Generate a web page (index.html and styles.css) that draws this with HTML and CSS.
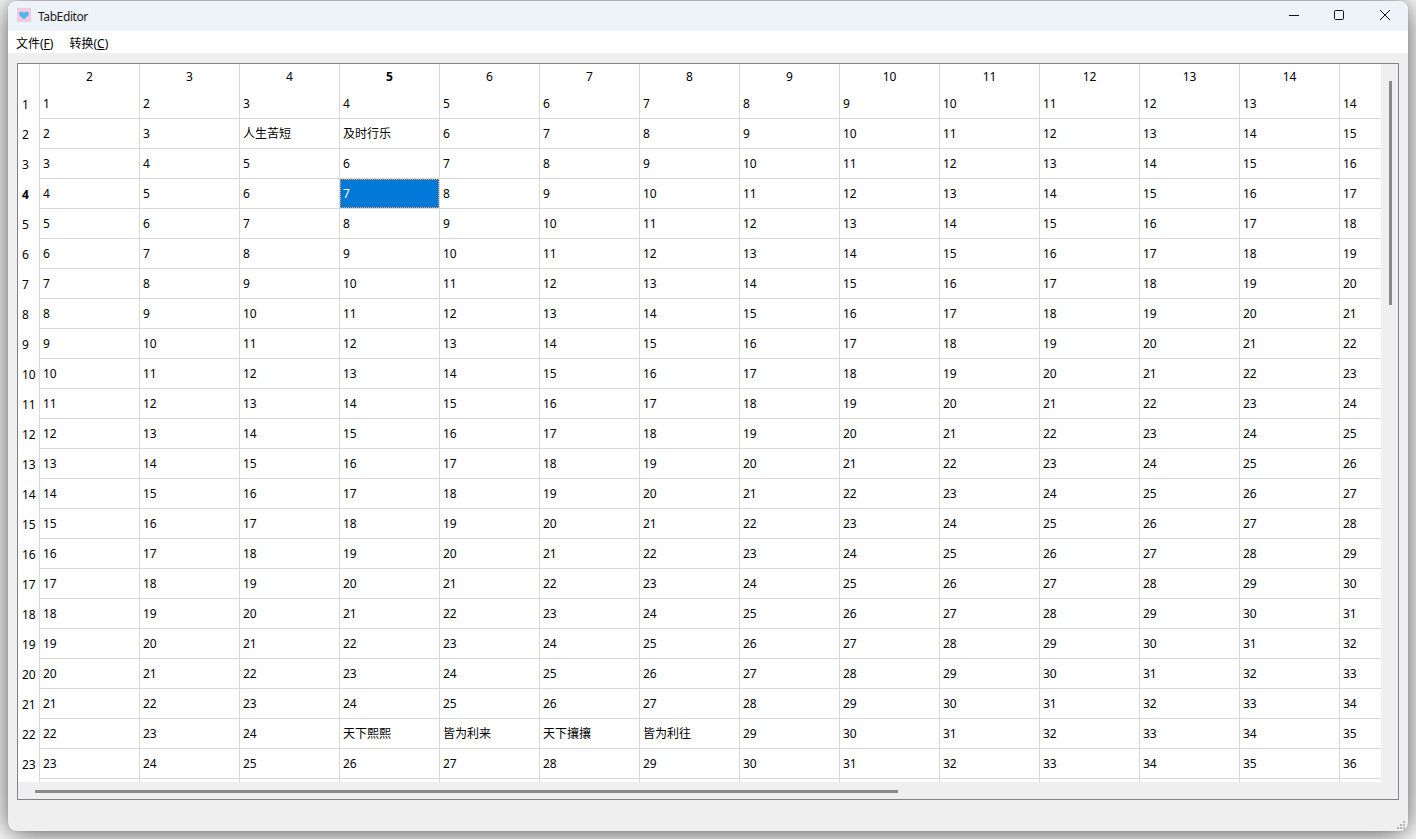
FILE: index.html
```html
<!DOCTYPE html>
<html lang="zh-CN">
<head>
  <meta charset="UTF-8">
  <title>TabEditor</title>
  <link rel="stylesheet" href="styles.css">
</head>
<body>
<div class="window">
  <div class="titlebar">
    <svg class="app-icon" width="14" height="14" viewBox="0 0 14 14">
      <rect x="0.5" y="0.5" width="13" height="13" fill="#fcc6e4" stroke="#e8cfe0"/>
      <path d="M7 11.2 L2.6 7.4 C1.2 5.6 2.6 3.8 4.4 3.8 C5.6 3.8 6.5 4.2 7 5 C7.5 4.2 8.4 3.8 9.6 3.8 C11.4 3.8 12.8 5.6 11.4 7.4 Z" fill="#4db8ee"/>
    </svg>
    <span class="app-title">TabEditor</span>
    <div class="win-btns">
      <div class="win-btn">
        <svg width="12" height="12" viewBox="0 0 12 12"><path d="M2 6.5 H12" stroke="#111" fill="none"/></svg>
      </div>
      <div class="win-btn">
        <svg width="12" height="12" viewBox="0 0 12 12"><rect x="1.5" y="1.5" width="9" height="9" rx="1" stroke="#111" fill="none"/></svg>
      </div>
      <div class="win-btn">
        <svg width="12" height="12" viewBox="0 0 12 12"><path d="M1 1 L11 11 M11 1 L1 11" stroke="#111" fill="none"/></svg>
      </div>
    </div>
  </div>

  <div class="menubar">
    <span class="menu-item">文件(<u>F</u>)</span>
    <span class="menu-item">转换(<u>C</u>)</span>
  </div>

  <div class="central">
    <div class="frame">
      <div class="viewport">
        <table class="sheet">
          <thead>
            <tr><th class="corner"></th><th>2</th><th>3</th><th>4</th><th class="cur">5</th><th>6</th><th>7</th><th>8</th><th>9</th><th>10</th><th>11</th><th>12</th><th>13</th><th>14</th><th></th></tr>
          </thead>
          <tbody>
            <tr><th>1</th><td>1</td><td>2</td><td>3</td><td>4</td><td>5</td><td>6</td><td>7</td><td>8</td><td>9</td><td>10</td><td>11</td><td>12</td><td>13</td><td>14</td></tr>
            <tr><th>2</th><td>2</td><td>3</td><td>人生苦短</td><td>及时行乐</td><td>6</td><td>7</td><td>8</td><td>9</td><td>10</td><td>11</td><td>12</td><td>13</td><td>14</td><td>15</td></tr>
            <tr><th>3</th><td>3</td><td>4</td><td>5</td><td>6</td><td>7</td><td>8</td><td>9</td><td>10</td><td>11</td><td>12</td><td>13</td><td>14</td><td>15</td><td>16</td></tr>
            <tr><th class="cur">4</th><td>4</td><td>5</td><td>6</td><td class="selected">7</td><td>8</td><td>9</td><td>10</td><td>11</td><td>12</td><td>13</td><td>14</td><td>15</td><td>16</td><td>17</td></tr>
            <tr><th>5</th><td>5</td><td>6</td><td>7</td><td>8</td><td>9</td><td>10</td><td>11</td><td>12</td><td>13</td><td>14</td><td>15</td><td>16</td><td>17</td><td>18</td></tr>
            <tr><th>6</th><td>6</td><td>7</td><td>8</td><td>9</td><td>10</td><td>11</td><td>12</td><td>13</td><td>14</td><td>15</td><td>16</td><td>17</td><td>18</td><td>19</td></tr>
            <tr><th>7</th><td>7</td><td>8</td><td>9</td><td>10</td><td>11</td><td>12</td><td>13</td><td>14</td><td>15</td><td>16</td><td>17</td><td>18</td><td>19</td><td>20</td></tr>
            <tr><th>8</th><td>8</td><td>9</td><td>10</td><td>11</td><td>12</td><td>13</td><td>14</td><td>15</td><td>16</td><td>17</td><td>18</td><td>19</td><td>20</td><td>21</td></tr>
            <tr><th>9</th><td>9</td><td>10</td><td>11</td><td>12</td><td>13</td><td>14</td><td>15</td><td>16</td><td>17</td><td>18</td><td>19</td><td>20</td><td>21</td><td>22</td></tr>
            <tr><th>10</th><td>10</td><td>11</td><td>12</td><td>13</td><td>14</td><td>15</td><td>16</td><td>17</td><td>18</td><td>19</td><td>20</td><td>21</td><td>22</td><td>23</td></tr>
            <tr><th>11</th><td>11</td><td>12</td><td>13</td><td>14</td><td>15</td><td>16</td><td>17</td><td>18</td><td>19</td><td>20</td><td>21</td><td>22</td><td>23</td><td>24</td></tr>
            <tr><th>12</th><td>12</td><td>13</td><td>14</td><td>15</td><td>16</td><td>17</td><td>18</td><td>19</td><td>20</td><td>21</td><td>22</td><td>23</td><td>24</td><td>25</td></tr>
            <tr><th>13</th><td>13</td><td>14</td><td>15</td><td>16</td><td>17</td><td>18</td><td>19</td><td>20</td><td>21</td><td>22</td><td>23</td><td>24</td><td>25</td><td>26</td></tr>
            <tr><th>14</th><td>14</td><td>15</td><td>16</td><td>17</td><td>18</td><td>19</td><td>20</td><td>21</td><td>22</td><td>23</td><td>24</td><td>25</td><td>26</td><td>27</td></tr>
            <tr><th>15</th><td>15</td><td>16</td><td>17</td><td>18</td><td>19</td><td>20</td><td>21</td><td>22</td><td>23</td><td>24</td><td>25</td><td>26</td><td>27</td><td>28</td></tr>
            <tr><th>16</th><td>16</td><td>17</td><td>18</td><td>19</td><td>20</td><td>21</td><td>22</td><td>23</td><td>24</td><td>25</td><td>26</td><td>27</td><td>28</td><td>29</td></tr>
            <tr><th>17</th><td>17</td><td>18</td><td>19</td><td>20</td><td>21</td><td>22</td><td>23</td><td>24</td><td>25</td><td>26</td><td>27</td><td>28</td><td>29</td><td>30</td></tr>
            <tr><th>18</th><td>18</td><td>19</td><td>20</td><td>21</td><td>22</td><td>23</td><td>24</td><td>25</td><td>26</td><td>27</td><td>28</td><td>29</td><td>30</td><td>31</td></tr>
            <tr><th>19</th><td>19</td><td>20</td><td>21</td><td>22</td><td>23</td><td>24</td><td>25</td><td>26</td><td>27</td><td>28</td><td>29</td><td>30</td><td>31</td><td>32</td></tr>
            <tr><th>20</th><td>20</td><td>21</td><td>22</td><td>23</td><td>24</td><td>25</td><td>26</td><td>27</td><td>28</td><td>29</td><td>30</td><td>31</td><td>32</td><td>33</td></tr>
            <tr><th>21</th><td>21</td><td>22</td><td>23</td><td>24</td><td>25</td><td>26</td><td>27</td><td>28</td><td>29</td><td>30</td><td>31</td><td>32</td><td>33</td><td>34</td></tr>
            <tr><th>22</th><td>22</td><td>23</td><td>24</td><td>天下熙熙</td><td>皆为利来</td><td>天下攘攘</td><td>皆为利往</td><td>29</td><td>30</td><td>31</td><td>32</td><td>33</td><td>34</td><td>35</td></tr>
            <tr><th>23</th><td>23</td><td>24</td><td>25</td><td>26</td><td>27</td><td>28</td><td>29</td><td>30</td><td>31</td><td>32</td><td>33</td><td>34</td><td>35</td><td>36</td></tr>
            <tr><th></th><td></td><td></td><td></td><td></td><td></td><td></td><td></td><td></td><td></td><td></td><td></td><td></td><td></td><td></td></tr>
          </tbody>
        </table>
      </div>
      <div class="vscroll"><div class="vthumb"></div></div>
      <div class="hscroll"><div class="hthumb"></div></div>
      <div class="scroll-corner"></div>
    </div>
  </div>

  <div class="statusbar">
    <svg class="grip" width="10" height="9" viewBox="0 0 10 9">
      <rect x="6" y="0" width="2" height="2"/>
      <rect x="3" y="3" width="2" height="2"/>
      <rect x="6" y="3" width="2" height="2"/>
      <rect x="0" y="6" width="2" height="2"/>
      <rect x="3" y="6" width="2" height="2"/>
      <rect x="6" y="6" width="2" height="2"/>
    </svg>
  </div>
</div>
</body>
</html>
```

FILE: styles.css
```css
* { margin: 0; padding: 0; box-sizing: border-box; }

html, body {
  height: 100%;
  overflow: hidden;
}

body {
  background: #ffffff;
  font-family: "Noto Sans", "Noto Sans CJK SC", "Open Sans", sans-serif;
  font-size: 12px;
  color: #000;
  padding: 1px 8px 8px;
}

.window {
  width: 1400px;
  height: 830px;
  background: #efefef;
  border-radius: 8px;
  overflow: hidden;
  display: flex;
  flex-direction: column;
  box-shadow: 0 0 1px #8c8c8c, 0 2px 30px rgba(0, 0, 0, 0.7);
}

/* Title bar */
.titlebar {
  height: 30px;
  background: #eef3fa;
  display: flex;
  align-items: center;
  padding-left: 9px;
}

.app-icon {
  flex: none;
  margin-bottom: 2px;
}

.app-title {
  margin-left: 7px;
  color: #1a1a1a;
  letter-spacing: -0.4px;
}

.win-btns {
  margin-left: auto;
  display: flex;
}

.win-btn {
  width: 46px;
  height: 30px;
  display: flex;
  justify-content: center;
  padding-top: 8px;
}

/* Menu */
.menubar {
  height: 22px;
  background: #fff;
  display: flex;
  align-items: center;
  padding: 1px 0 0 8px;
  gap: 16px;
}

/* Table */
.central {
  height: 747px;
  padding: 10px 9px 0;
}

.frame {
  width: 1382px;
  height: 737px;
  border: 1px solid #82828c;
  display: grid;
  grid-template-columns: 1363px 17px;
  grid-template-rows: 718px 17px;
}

.viewport {
  overflow: hidden;
  background: #fff;
}

.sheet {
  border-collapse: separate;
  border-spacing: 0;
  table-layout: fixed;
  width: 1422px;
}

.sheet th, .sheet td {
  width: 100px;
  height: 30px;
  font-weight: normal;
  white-space: nowrap;
  overflow: hidden;
  border-right: 1px solid #d8d8d8;
}

.sheet thead th {
  height: 25px;
  text-align: center;
  vertical-align: middle;
}

.sheet th.corner { width: 22px; }

.sheet tbody th {
  width: 22px;
  text-align: left;
  padding-left: 4px;
}

.sheet td {
  padding: 0 0 1px 3px;
  border-bottom: 1px solid #d8d8d8;
}

.sheet th.cur { font-weight: bold; }

.sheet td.selected {
  position: relative;
  background: #0078d7;
  color: #fff;
}

/* dotted focus box inside the grid lines */
.sheet td.selected::after {
  content: '';
  position: absolute;
  inset: 0;
  border: 1px dotted #f0a24c;
}

/* Scrollbars */
.vscroll {
  padding: 17px 0 0 8px;
}

.vthumb {
  width: 3px;
  height: 224px;
  background: #8a8a8a;
}

.hscroll {
  padding: 8px 0 0 17px;
}

.hthumb {
  width: 863px;
  height: 3px;
  background: #8a8a8a;
}

/* Bottom */
.statusbar {
  flex: 1;
  display: flex;
  justify-content: flex-end;
  align-items: flex-end;
  padding: 0 1px 1px 0;
}

.grip { fill: #b4b4b4; }
```
